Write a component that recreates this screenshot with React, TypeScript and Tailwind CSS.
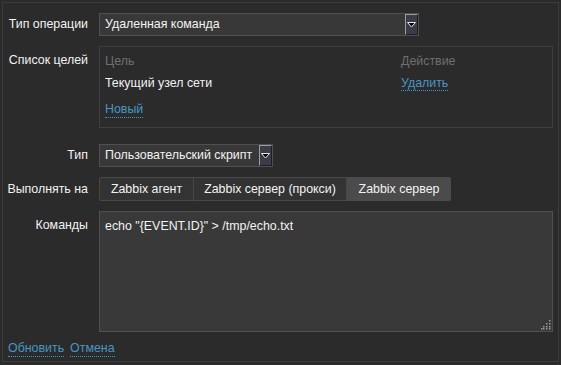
import React from "react";

const font = { fontFamily: '"Liberation Sans", Arial, sans-serif' };

function DropButton() {
  return (
    <div className="h-full w-[13px] shrink-0 bg-[#3a3c48] border-l border-t border-[#9b9ba3] border-r border-r-[#1e1e24] border-b border-b-[#1e1e24] flex items-center justify-center">
      <svg width="9" height="6" viewBox="0 0 9 6">
        <path d="M0.5 0.5 L8.5 0.5 L4.5 5 Z" fill="#000" stroke="#e8e8e8" strokeWidth="1" />
      </svg>
    </div>
  );
}

function Select({ value, width }: { value: string; width: string }) {
  return (
    <div className={`${width} h-[23px] flex items-stretch bg-[#383838] border border-[#505050]`}>
      <div className="flex-1 flex items-center pl-[5px] text-[#f2f2f2]">{value}</div>
      <DropButton />
    </div>
  );
}

function Link({ children }: { children: React.ReactNode }) {
  return (
    <span className="text-[#4796c4] border-b border-dotted border-[#4796c4] leading-[15px] cursor-pointer">
      {children}
    </span>
  );
}

function Row({ label, top, children, labelTop }: { label: string; top: string; children: React.ReactNode; labelTop?: boolean }) {
  return (
    <div className={`flex ${top}`}>
      <div
        className={`w-[96px] shrink-0 pr-[11px] text-right text-[#f2f2f2] whitespace-nowrap ${
          labelTop ? "pt-[5px]" : "flex items-center justify-end"
        }`}
      >
        {label}
      </div>
      {children}
    </div>
  );
}

export default function App() {
  return (
    <div className="w-[561px] h-[365px] bg-[#2b2b2b] p-[2px] text-[12.4px]" style={font}>
      <div className="h-[360px] border border-[#3c3c3c] flex flex-col">
        <Row label="Тип операции" top="mt-[10px]">
          <Select value="Удаленная команда" width="w-[320px]" />
        </Row>

        <Row label="Список целей" top="mt-[10px]" labelTop>
          <div className="w-[454px] h-[82px] border border-[#3e3e3e] px-[5px] pt-[6px]">
            <div className="flex text-[#6f6f6f] h-[16px] items-center">
              <div className="w-[296px]">Цель</div>
              <div>Действие</div>
            </div>
            <div className="flex text-[#f2f2f2] mt-[6px] h-[16px] items-center">
              <div className="w-[296px]">Текущий узел сети</div>
              <div>
                <Link>Удалить</Link>
              </div>
            </div>
            <div className="mt-[11px] h-[16px] flex items-center">
              <Link>Новый</Link>
            </div>
          </div>
        </Row>

        <Row label="Тип" top="mt-[16px]">
          <Select value="Пользовательский скрипт" width="w-[174px]" />
        </Row>

        <Row label="Выполнять на" top="mt-[10px]">
          <div className="flex h-[24px] text-[#f2f2f2]">
            <div className="w-[95px] flex items-center justify-center bg-[#333333] border border-[#484848] rounded-l-[2px]">
              Zabbix агент
            </div>
            <div className="w-[153px] flex items-center justify-center bg-[#333333] border-y border-r border-[#484848]">
              Zabbix сервер (прокси)
            </div>
            <div className="w-[104px] flex items-center justify-center bg-[#4b4b4b] rounded-r-[2px]">
              Zabbix сервер
            </div>
          </div>
        </Row>

        <Row label="Команды" top="mt-[10px]" labelTop>
          <div className="relative w-[454px] h-[121px] bg-[#393939] border border-[#505050] px-[5px] pt-[5px] text-[#f2f2f2]">
            echo "{"{EVENT.ID}"}" &gt; /tmp/echo.txt
            <svg className="absolute right-[1px] bottom-[1px]" width="10" height="10" viewBox="0 0 10 10">
              {[
                [8, 0],
                [8, 3],
                [5, 3],
                [8, 6],
                [5, 6],
                [2, 6],
                [8, 8],
                [5, 8],
                [2, 8],
                [0, 8],
              ].map(([x, y], i) => (
                <rect key={i} x={x} y={y} width="1.5" height="1.5" fill="#9a9a9a" />
              ))}
            </svg>
          </div>
        </Row>

        <div className="flex gap-[6px] pl-[5px] mt-[9px]">
          <Link>Обновить</Link>
          <Link>Отмена</Link>
        </div>
      </div>
    </div>
  );
}
